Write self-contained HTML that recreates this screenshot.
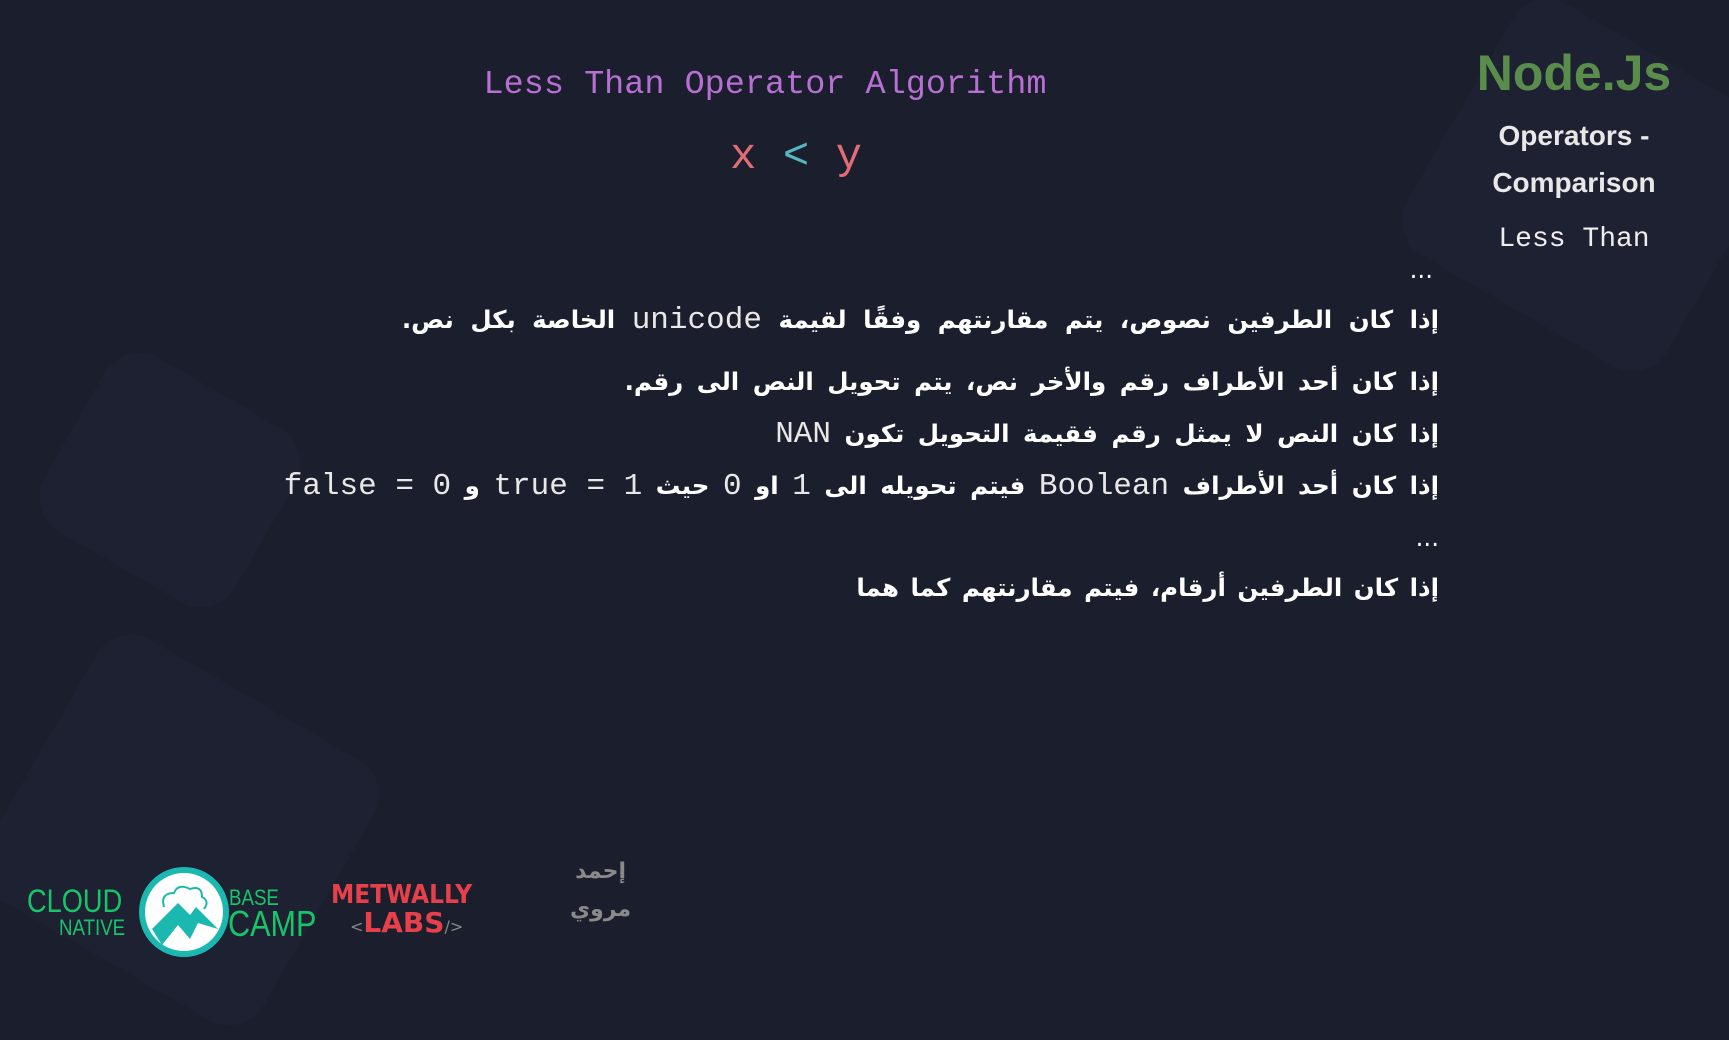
<!DOCTYPE html>
<html><head><meta charset="utf-8"><style>
body{margin:0;width:1729px;height:971px;background:#1b1f2d;overflow:hidden;position:relative;font-family:"Liberation Sans","DejaVu Sans",sans-serif}
.a{position:absolute;right:290px;color:#fff;font-size:24.5px;font-weight:bold;font-family:"DejaVu Sans",sans-serif;direction:rtl;white-space:nowrap;line-height:40px;word-spacing:5px}
.m{font-family:"Liberation Mono",monospace;font-weight:normal;color:#e8e8e8;font-size:31px;word-spacing:0}
.hex{position:absolute;background:#1f2436;border-radius:40px;opacity:.5}
</style></head><body>
<div class="hex" style="left:1440px;top:40px;width:300px;height:290px;transform:rotate(30deg)"></div>
<div class="hex" style="left:60px;top:380px;width:220px;height:200px;transform:rotate(30deg)"></div>
<div class="hex" style="left:20px;top:680px;width:320px;height:300px;transform:rotate(30deg)"></div>
<div style="position:absolute;left:470px;top:66px;width:590px;text-align:center;font-family:'Liberation Mono',monospace;font-size:33.5px;color:#b86fd3">Less Than Operator Algorithm</div>
<div style="position:absolute;left:730px;top:132px;font-family:'Liberation Mono',monospace;font-size:44px;white-space:pre"><span style="color:#e06c75">x</span> <span style="color:#56b6c2">&lt;</span> <span style="color:#e06c75">y</span></div>
<div style="position:absolute;left:1440px;top:44px;width:268px;text-align:center;color:#5a8d4b;font-weight:bold;font-size:50px">Node.Js</div>
<div style="position:absolute;left:1440px;top:112px;width:268px;text-align:center;color:#e8e8e8;font-weight:bold;font-size:28px;line-height:47px">Operators -<br>Comparison</div>
<div style="position:absolute;left:1440px;top:224px;width:268px;text-align:center;color:#eee;font-family:'Liberation Mono',monospace;font-size:28px">Less Than</div>
<div class="a" style="top:250px;right:296px;font-weight:normal">...</div>
<div class="a" style="top:300px;word-spacing:8px">إذا كان الطرفين نصوص، يتم مقارنتهم وفقًا لقيمة <span class="m">unicode</span> الخاصة بكل نص.</div>
<div class="a" style="top:362px">إذا كان أحد الأطراف رقم والأخر نص، يتم تحويل النص الى رقم.</div>
<div class="a" style="top:414px">إذا كان النص لا يمثل رقم فقيمة التحويل تكون <span class="m">NAN</span></div>
<div class="a" style="top:466px">إذا كان أحد الأطراف <span class="m">Boolean</span> فيتم تحويله الى <span class="m">1</span> او <span class="m">0</span> حيث <span class="m" dir="ltr">true = 1</span> و <span class="m" dir="ltr">false = 0</span></div>
<div class="a" style="top:518px;font-weight:normal">...</div>
<div class="a" style="top:568px;word-spacing:3px">إذا كان الطرفين أرقام، فيتم مقارنتهم كما هما</div>
<div style="position:absolute;left:27px;top:886px;color:#18c46a;font-size:32px;line-height:30px;transform:scaleX(.85);transform-origin:left">CLOUD</div>
<div style="position:absolute;left:59px;top:915px;color:#18c46a;font-size:22px;transform:scaleX(.85);transform-origin:left">NATIVE</div>
<svg style="position:absolute;left:138px;top:867px" width="92" height="90"><ellipse cx="46" cy="45" rx="42" ry="42" fill="#fff" stroke="#1bb8b0" stroke-width="6"/><path d="M14 62 L40 36 L52 48 L58 40 L80 62 L60 56 L52 72 L40 58 L24 78Z" fill="#1bb8b0"/><path d="M26 40 q-4-14 10-14 q4-10 16-4 q12-4 12 8 q8 4 2 12" fill="none" stroke="#1bb8b0" stroke-width="2"/></svg>
<div style="position:absolute;left:229px;top:885px;color:#18c46a;font-size:22px;transform:scaleX(.85);transform-origin:left">BASE</div>
<div style="position:absolute;left:228px;top:903px;color:#18c46a;font-size:36px;transform:scaleX(.85);transform-origin:left">CAMP</div>
<div style="position:absolute;left:331px;top:880px;color:#e8404a;font-size:26px;font-weight:bold;font-family:'DejaVu Sans',sans-serif;transform:scaleX(.9);transform-origin:left">METWALLY</div>
<div style="position:absolute;left:350px;top:906px;color:#e8404a;font-size:28px;font-weight:bold;font-family:'DejaVu Sans',sans-serif"><span style="color:#888;font-size:16px;font-weight:normal">&lt;</span>LABS<span style="color:#888;font-size:16px;font-weight:normal">/&gt;</span></div>
<div style="position:absolute;left:570px;top:853px;color:#8a8a8a;font-size:22px;line-height:38px;font-family:'DejaVu Sans',sans-serif;text-align:right;width:56px;font-weight:bold">إحمد<br>مروي</div>
</body></html>
